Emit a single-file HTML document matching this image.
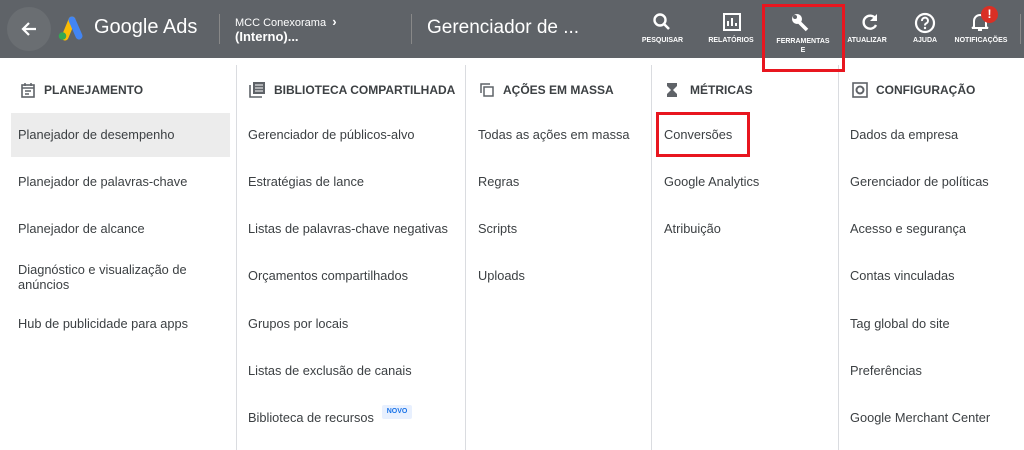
<!DOCTYPE html>
<html><head><meta charset="utf-8"><style>
*{box-sizing:border-box;margin:0;padding:0}
body{width:1024px;height:450px;overflow:hidden;background:#fff;font-family:"Liberation Sans",Arial,sans-serif;position:relative;color:#3c4043}
.hdr{position:absolute;left:0;top:0;width:1024px;height:58px;background:#5f6368;color:#fff}
.a{position:absolute}
.div{position:absolute;width:1px;background:#dadce0;top:65px;bottom:0}
.h{position:absolute;top:83px;font-size:12px;font-weight:bold;color:#3c4043}
.it{position:absolute;font-size:12.8px;color:#3c4043;line-height:15px}
.tb{position:absolute;top:37px;font-size:7px;font-weight:bold;color:#fff;text-align:center}
.ic{position:absolute;top:12px}
</style></head><body>
<div class="hdr">
 <div class="a" style="left:7px;top:7px;width:44px;height:44px;border-radius:50%;background:#6a6e72"></div>
 <svg class="a" style="left:19px;top:19px" width="20" height="20" viewBox="0 0 20 20"><path d="M17 10H4M10 4L4 10l6 6" stroke="#fff" stroke-width="2.2" fill="none"/></svg>
 <svg class="a" style="left:56px;top:15px" width="28" height="26" viewBox="0 0 28 26"><path d="M9 22L16 5" stroke="#fbbc04" stroke-width="7" stroke-linecap="round"/><path d="M16 5l7 16" stroke="#4285f4" stroke-width="7" stroke-linecap="round"/><circle cx="6.5" cy="21" r="3.8" fill="#34a853"/></svg>
 <div class="a" style="left:94px;top:16px;font-size:20px">Google Ads</div>
 <div class="a" style="left:219px;top:14px;width:1px;height:30px;background:#888"></div>
 <div class="a" style="left:235px;top:14px;font-size:11px">MCC Conexorama &nbsp;<b style="font-size:13px">›</b></div>
 <div class="a" style="left:235px;top:29px;font-size:13px;font-weight:bold">(Interno)...</div>
 <div class="a" style="left:411px;top:14px;width:1px;height:30px;background:#888"></div>
 <div class="a" style="left:427px;top:17px;font-size:19px">Gerenciador de ...</div>
 <svg class="ic" style="left:652px" width="20" height="20" viewBox="0 0 20 20"><circle cx="8" cy="8" r="5.5" stroke="#fff" stroke-width="2.4" fill="none"/><path d="M12 12l5 5" stroke="#fff" stroke-width="2.6"/></svg>
 <div class="tb" style="left:640px;width:45px">PESQUISAR</div>
 <svg class="ic" style="left:722px" width="20" height="20" viewBox="0 0 20 20"><rect x="2" y="2" width="16" height="16" fill="none" stroke="#fff" stroke-width="2"/><path d="M6 14V9M10 14V6M14 14v-3" stroke="#fff" stroke-width="2"/></svg>
 <div class="tb" style="left:705px;width:52px">RELATÓRIOS</div>
 <svg class="ic" style="left:789px" width="22" height="22" viewBox="0 0 22 22"><circle cx="8" cy="7" r="5" fill="#fff"/><path d="M9 9l9 9" stroke="#fff" stroke-width="3.5"/><circle cx="6" cy="5" r="2" fill="#5f6368"/></svg>
 <div class="tb" style="left:772px;width:62px;line-height:9px">FERRAMENTAS<br>E</div>
 <svg class="ic" style="left:860px" width="20" height="20" viewBox="0 0 20 20"><path d="M15.5 6.5A6.5 6.5 0 1 0 16 13" stroke="#fff" stroke-width="2.4" fill="none"/><path d="M17 2v7h-7z" fill="#fff"/></svg>
 <div class="tb" style="left:845px;width:44px">ATUALIZAR</div>
 <svg class="ic" style="left:914px" width="22" height="22" viewBox="0 0 22 22"><circle cx="11" cy="11" r="9" stroke="#fff" stroke-width="2.2" fill="none"/><path d="M8 9a3 3 0 1 1 4 2.5c-1 .5-1 1-1 2" stroke="#fff" stroke-width="2" fill="none"/><circle cx="11" cy="16" r="1.2" fill="#fff"/></svg>
 <div class="tb" style="left:905px;width:40px">AJUDA</div>
 <svg class="ic" style="left:970px" width="20" height="20" viewBox="0 0 20 20"><path d="M4 15V9a6 6 0 0 1 12 0v6l2 1H2z" fill="none" stroke="#fff" stroke-width="2"/><path d="M8 18h4" stroke="#fff" stroke-width="2"/></svg>
 <div class="a" style="left:981px;top:6px;width:17px;height:17px;border-radius:50%;background:#d93025;color:#fff;font-size:12px;font-weight:bold;text-align:center;line-height:17px">!</div>
 <div class="tb" style="left:952px;width:58px">NOTIFICAÇÕES</div>
 <div class="a" style="left:1020px;top:14px;width:1px;height:30px;background:#888"></div>
</div>
<div class="div" style="left:236px"></div>
<div class="div" style="left:465px"></div>
<div class="div" style="left:651px"></div>
<div class="div" style="left:838px"></div>

<svg class="a" style="left:20px;top:82px" width="16" height="16" viewBox="0 0 16 16"><rect x="2" y="3" width="12" height="12" fill="none" stroke="#5f6368" stroke-width="1.6"/><path d="M2 6h12M5 9h6M5 12h4M5 1v3M11 1v3" stroke="#5f6368" stroke-width="1.5"/></svg>
<div class="h" style="left:44px">PLANEJAMENTO</div>
<svg class="a" style="left:249px;top:81px" width="17" height="17" viewBox="0 0 17 17"><rect x="4" y="1" width="12" height="12" fill="#5f6368"/><path d="M1 4v12h12" stroke="#5f6368" stroke-width="1.6" fill="none"/><path d="M6 4h8M6 7h8M6 10h8" stroke="#fff" stroke-width="1"/></svg>
<div class="h" style="left:274px">BIBLIOTECA COMPARTILHADA</div>
<svg class="a" style="left:479px;top:82px" width="16" height="16" viewBox="0 0 16 16"><rect x="5" y="5" width="9" height="9" fill="none" stroke="#5f6368" stroke-width="1.5"/><path d="M2 11V2h9" fill="none" stroke="#5f6368" stroke-width="1.5"/></svg>
<div class="h" style="left:503px">AÇÕES EM MASSA</div>
<svg class="a" style="left:666px;top:82px" width="12" height="16" viewBox="0 0 12 16"><path d="M1 1h10v3L7 8l4 4v3H1v-3l4-4-4-4z" fill="#5f6368"/></svg>
<div class="h" style="left:690px">MÉTRICAS</div>
<svg class="a" style="left:852px;top:82px" width="16" height="16" viewBox="0 0 16 16"><rect x="1" y="1" width="14" height="14" fill="none" stroke="#5f6368" stroke-width="1.6"/><circle cx="8" cy="8" r="3.5" fill="none" stroke="#5f6368" stroke-width="2"/></svg>
<div class="h" style="left:876px">CONFIGURAÇÃO</div>

<div class="a" style="left:11px;top:113px;width:219px;height:44px;background:#ececec"></div>
<div class="it" style="left:18px;top:127px">Planejador de desempenho</div>
<div class="it" style="left:18px;top:174px">Planejador de palavras-chave</div>
<div class="it" style="left:18px;top:221px">Planejador de alcance</div>
<div class="it" style="left:18px;top:262px">Diagnóstico e visualização de<br>anúncios</div>
<div class="it" style="left:18px;top:316px">Hub de publicidade para apps</div>

<div class="it" style="left:248px;top:127px">Gerenciador de públicos-alvo</div>
<div class="it" style="left:248px;top:174px">Estratégias de lance</div>
<div class="it" style="left:248px;top:221px">Listas de palavras-chave negativas</div>
<div class="it" style="left:248px;top:268px">Orçamentos compartilhados</div>
<div class="it" style="left:248px;top:316px">Grupos por locais</div>
<div class="it" style="left:248px;top:363px">Listas de exclusão de canais</div>
<div class="it" style="left:248px;top:410px">Biblioteca de recursos</div>
<div class="a" style="left:382px;top:405px;width:30px;height:14px;background:#e8f0fe;color:#1a73e8;font-size:7px;font-weight:bold;text-align:center;line-height:14px;border-radius:2px">NOVO</div>

<div class="it" style="left:478px;top:127px">Todas as ações em massa</div>
<div class="it" style="left:478px;top:174px">Regras</div>
<div class="it" style="left:478px;top:221px">Scripts</div>
<div class="it" style="left:478px;top:268px">Uploads</div>

<div class="it" style="left:664px;top:127px">Conversões</div>
<div class="it" style="left:664px;top:174px">Google Analytics</div>
<div class="it" style="left:664px;top:221px">Atribuição</div>

<div class="it" style="left:850px;top:127px">Dados da empresa</div>
<div class="it" style="left:850px;top:174px">Gerenciador de políticas</div>
<div class="it" style="left:850px;top:221px">Acesso e segurança</div>
<div class="it" style="left:850px;top:268px">Contas vinculadas</div>
<div class="it" style="left:850px;top:316px">Tag global do site</div>
<div class="it" style="left:850px;top:363px">Preferências</div>
<div class="it" style="left:850px;top:410px">Google Merchant Center</div>

<div class="a" style="left:762px;top:4px;width:83px;height:68px;border:3px solid #e8161f"></div>
<div class="a" style="left:656px;top:112px;width:94px;height:45px;border:3px solid #e8161f"></div>
</body></html>
